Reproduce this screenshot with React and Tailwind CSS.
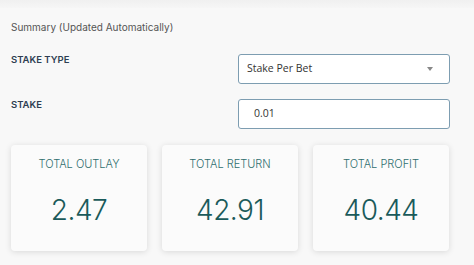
import React from "react";

function Card({ title, value }) {
  return (
    <div className="flex h-[106px] w-[136px] flex-col items-center rounded-[4px] bg-[#fbfbfb] shadow-[0_1px_6px_rgba(0,0,0,0.13)]">
      <div className="mt-[11px] text-[11px] font-light leading-[16px] text-[#2f6e6e]">{title}</div>
      <div className="mt-[20px] text-[28px] font-light leading-[36px] tracking-[-0.5px] text-[#1a5a5a]">{value}</div>
    </div>
  );
}

export default function App() {
  return (
    <div className="h-[265px] w-[474px] overflow-hidden bg-[#f8f8f8]" style={{ fontFamily: '"Inter", "Noto Sans", sans-serif' }}>
      <div className="h-[8px] bg-gradient-to-b from-[#f0f0f0] to-[#f6f6f6]" />
      <div className="pl-[11px] pr-[24px]">
        <div className="mt-[12px] text-[10px] leading-[14px] text-[#555]">Summary (Updated Automatically)</div>
        <div className="mt-[20px] flex items-start justify-between">
          <div className="mt-[0px] text-[9.5px] font-semibold leading-[12px] text-[#2e3e52]">STAKE TYPE</div>
          <div className="flex h-[30px] w-[212px] items-center justify-between rounded-[3px] border border-[#7d9db1] bg-white pl-[8px] pr-[16px]" style={{ fontFamily: '"Open Sans", sans-serif' }}>
            <span className="text-[10.5px] text-[#333]">Stake Per Bet</span>
            <svg width="6" height="4" viewBox="0 0 6 4"><path d="M0 0h6L3 4z" fill="#888" /></svg>
          </div>
        </div>
        <div className="mt-[15px] flex items-start justify-between">
          <div className="mt-[0px] text-[9.5px] font-semibold leading-[12px] text-[#2e3e52]">STAKE</div>
          <div className="flex h-[30px] w-[212px] items-center rounded-[3px] border border-[#7d9db1] bg-white pl-[15px]" style={{ fontFamily: '"Open Sans", sans-serif' }}>
            <span className="text-[10.5px] text-[#333]">0.01</span>
          </div>
        </div>
        <div className="mt-[16px] flex gap-[15px]">
          <Card title="TOTAL OUTLAY" value="2.47" />
          <Card title="TOTAL RETURN" value="42.91" />
          <Card title="TOTAL PROFIT" value="40.44" />
        </div>
      </div>
    </div>
  );
}
